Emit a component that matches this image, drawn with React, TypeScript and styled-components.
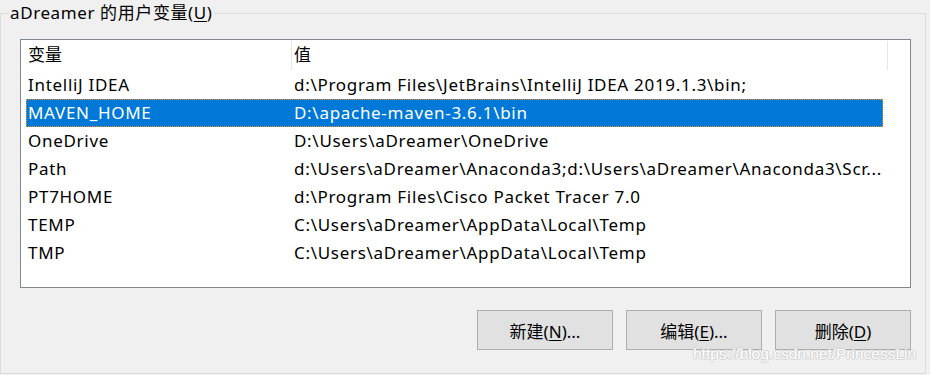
import styled, { createGlobalStyle } from 'styled-components';

const GlobalStyle = createGlobalStyle`
	html, body {
		margin: 0;
		padding: 0;
		background: #f0f0f0;
	}
	body {
		width: 930px;
		height: 375px;
		overflow: hidden;
		font-family: 'Noto Sans', 'Noto Sans CJK SC', sans-serif;
		color: #000;
	}
`;

type Variable = { name: string; value: string };

const variables: Variable[] = [
	{ name: 'IntelliJ IDEA', value: 'd:\\Program Files\\JetBrains\\IntelliJ IDEA 2019.1.3\\bin;' },
	{ name: 'MAVEN_HOME', value: 'D:\\apache-maven-3.6.1\\bin' },
	{ name: 'OneDrive', value: 'D:\\Users\\aDreamer\\OneDrive' },
	{ name: 'Path', value: 'd:\\Users\\aDreamer\\Anaconda3;d:\\Users\\aDreamer\\Anaconda3\\Scr...' },
	{ name: 'PT7HOME', value: 'd:\\Program Files\\Cisco Packet Tracer 7.0' },
	{ name: 'TEMP', value: 'C:\\Users\\aDreamer\\AppData\\Local\\Temp' },
	{ name: 'TMP', value: 'C:\\Users\\aDreamer\\AppData\\Local\\Temp' },
];

const SELECTED = 1;

const App = () => {
	return (
		<Page>
			<GlobalStyle />
			<GroupBox>
				<Title>
					aDreamer 的用户变量(<u>U</u>)
				</Title>
				<ListBox>
					<Header>
						<HeaderCell width={266}>变量</HeaderCell>
						<HeaderCell width={596}>值</HeaderCell>
					</Header>
					{variables.map((v, i) => (
						<Row key={v.name} selected={i === SELECTED}>
							<Cell width={266}>{v.name}</Cell>
							<Cell width={591}>{v.value}</Cell>
						</Row>
					))}
				</ListBox>
				<Buttons>
					<Button>
						新建(<u>N</u>)...
					</Button>
					<Button>
						编辑(<u>E</u>)...
					</Button>
					<Button>
						删除(<u>D</u>)
					</Button>
				</Buttons>
			</GroupBox>
			<Watermark>https://blog.csdn.net/PrincessLin</Watermark>
		</Page>
	);
};

const Page = styled.div`
	position: relative;
	width: 930px;
	height: 375px;
`;

const GroupBox = styled.fieldset`
	box-sizing: border-box;
	width: 926px;
	height: 374px;
	margin: 0;
	padding: 13px 14px 0 19px;
	border: 1px solid #dcdcdc;
	display: flex;
	flex-direction: column;
`;

const Title = styled.legend`
	margin-left: -11px;
	padding: 0 1px;
	font-size: 17px;
	line-height: 26px;
	letter-spacing: 0.6px;
	u {
		text-underline-offset: 2px;
	}
`;

const ListBox = styled.div`
	box-sizing: border-box;
	width: 891px;
	height: 249px;
	background: #fff;
	border: 1px solid #828790;
	padding-left: 5px;
	display: flex;
	flex-direction: column;
`;

const Header = styled.div`
	display: flex;
	height: 31px;
	margin-left: -5px;
	padding-left: 5px;
`;

const HeaderCell = styled.div<{ width: number }>`
	box-sizing: border-box;
	width: ${({ width }) => width}px;
	padding: 2px 0 0 2px;
	font-size: 17px;
	line-height: 24px;
	border-right: 1px solid #e5e5e5;
	margin: 1px 0;
`;

const Row = styled.div<{ selected: boolean }>`
	display: flex;
	width: 857px;
	height: 28px;
	box-sizing: border-box;
	background: ${({ selected }) => (selected ? '#0078d7' : 'transparent')};
	color: ${({ selected }) => (selected ? '#fff' : '#000')};
	outline: ${({ selected }) => (selected ? '1px dotted #f7931e' : 'none')};
	outline-offset: -1px;
`;

const Cell = styled.div<{ width: number }>`
	box-sizing: border-box;
	width: ${({ width }) => width}px;
	padding-left: 2px;
	font-size: 17px;
	line-height: 28px;
	letter-spacing: 0.7px;
	white-space: nowrap;
	overflow: hidden;
`;

const Buttons = styled.div`
	display: flex;
	justify-content: flex-end;
	gap: 13px;
	margin-top: 22px;
	width: 891px;
`;

const Button = styled.button`
	box-sizing: border-box;
	width: 136px;
	height: 40px;
	background: #e1e1e1;
	border: 1px solid #adadad;
	border-radius: 0;
	padding: 0;
	font-family: 'Noto Sans', 'Noto Sans CJK SC', sans-serif;
	font-size: 17px;
	color: #000;
	u {
		text-underline-offset: 2px;
	}
`;

const Watermark = styled.div`
	position: absolute;
	left: 693px;
	top: 345px;
	font-family: 'Liberation Sans', Arial, sans-serif;
	font-size: 15.5px;
	color: #ffffff;
	text-shadow: 1px 0 0 #d2d2d2, -1px 0 0 #d2d2d2, 0 1px 0 #d2d2d2, 0 -1px 0 #d2d2d2;
	white-space: nowrap;
`;

export default App;
